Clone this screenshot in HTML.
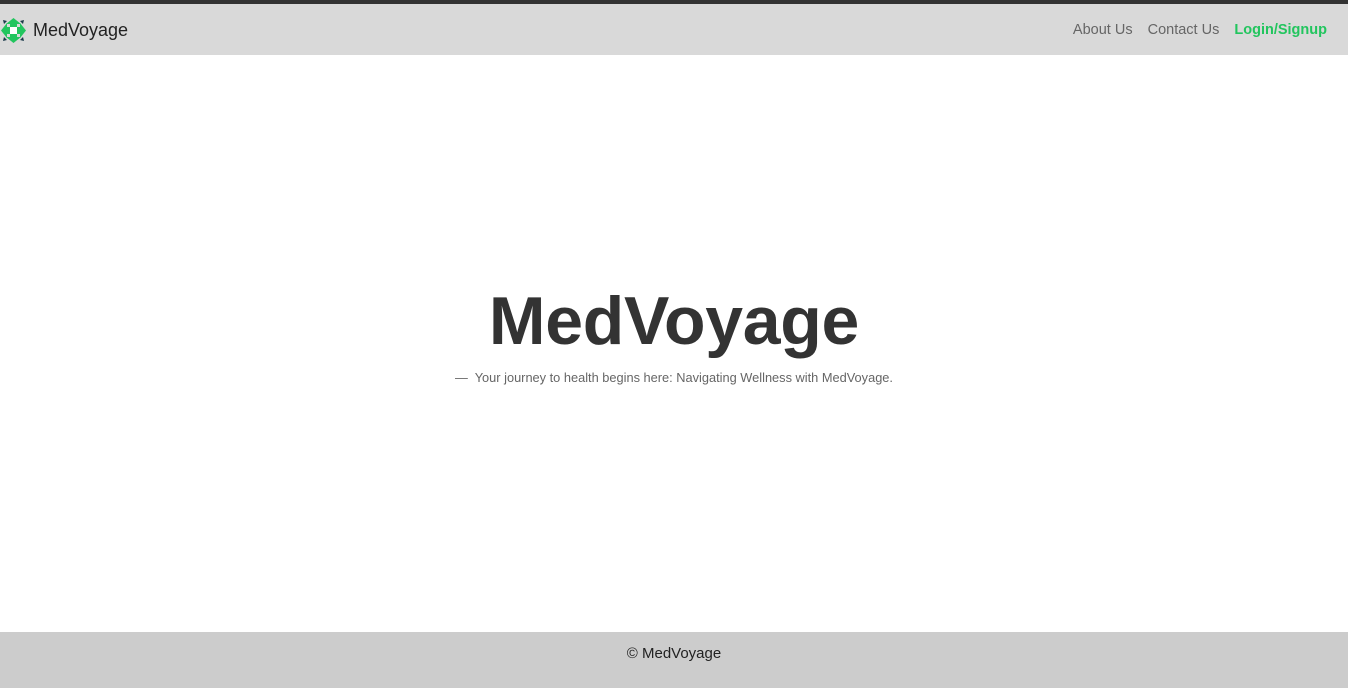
<!DOCTYPE html>
<html><head><style>
body{margin:0;width:1348px;height:688px;overflow:hidden;background:#fff;font-family:"Liberation Sans",sans-serif;position:relative}
.top{position:absolute;left:0;top:0;width:1348px;height:4px;background:#333}
nav{position:absolute;left:0;top:4px;width:1348px;height:51px;background:#d9d9d9}
.brand{position:absolute;left:33px;top:16px;font-size:18px;color:#222}
.links{position:absolute;right:21px;top:18px;font-size:14.5px;color:#666}
.links span{margin-left:11px}
.links .g{color:#22c55e;font-weight:bold}
h1{position:absolute;left:0;width:1348px;top:282px;margin:0;text-align:center;font-size:68px;font-weight:bold;color:#333;letter-spacing:-0.3px}
.sub{position:absolute;left:0;width:1348px;top:370px;text-align:center;font-size:12.8px;color:#666}
footer{position:absolute;left:0;top:632px;width:1348px;height:56px;background:#ccc;text-align:center;font-size:15px;color:#222;line-height:44px}
</style></head><body>
<div class="top"></div>
<nav>
<svg style="position:absolute;left:0;top:13px" width="27" height="27" viewBox="0 0 27 27">
<path d="M13.5 1 L21 7 L17 7 L17 10 L10 10 L10 7 L6 7Z" fill="#22c55e"/>
<path d="M26 13.5 L20 21 L20 17 L17 17 L17 10 L20 10 L20 6Z" fill="#22c55e"/>
<path d="M13.5 26 L6 20 L10 20 L10 17 L17 17 L17 20 L21 20Z" fill="#22c55e"/>
<path d="M1 13.5 L7 6 L7 10 L10 10 L10 17 L7 17 L7 21Z" fill="#22c55e"/>
<rect x="10" y="10" width="7" height="7" fill="#fff"/>
<path d="M3 3 L7 4 L4 7Z M24 3 L23 7 L20 4Z M24 24 L20 23 L23 20Z M3 24 L4 20 L7 23Z" fill="#1a3a4a"/>
</svg>
<div class="brand">MedVoyage</div>
<div class="links"><span>About Us</span> <span>Contact Us</span> <span class="g">Login/Signup</span></div>
</nav>
<h1>MedVoyage</h1>
<div class="sub">—&nbsp; Your journey to health begins here: Navigating Wellness with MedVoyage.</div>
<footer>© MedVoyage</footer>
</body></html>
